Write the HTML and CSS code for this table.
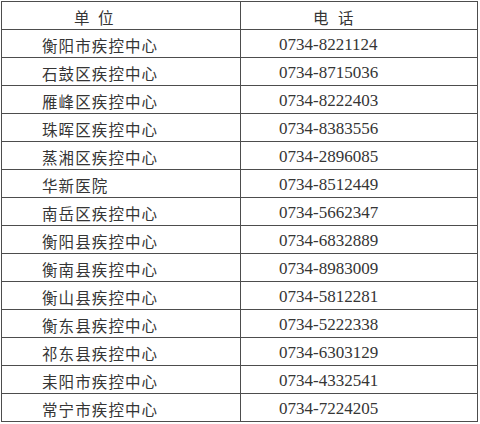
FILE: index.html
```html
<!DOCTYPE html>
<html lang="zh">
<head>
<meta charset="utf-8">
<link rel="stylesheet" href="styles.css">
</head>
<body>
<table class="tbl">
  <thead>
    <tr><th class="h-unit">单位</th><th class="h-tel">电话</th></tr>
  </thead>
  <tbody>
    <tr><td class="unit">衡阳市疾控中心</td><td class="tel">0734-8221124</td></tr>
    <tr><td class="unit">石鼓区疾控中心</td><td class="tel">0734-8715036</td></tr>
    <tr><td class="unit">雁峰区疾控中心</td><td class="tel">0734-8222403</td></tr>
    <tr><td class="unit">珠晖区疾控中心</td><td class="tel">0734-8383556</td></tr>
    <tr><td class="unit">蒸湘区疾控中心</td><td class="tel">0734-2896085</td></tr>
    <tr><td class="unit">华新医院</td><td class="tel">0734-8512449</td></tr>
    <tr><td class="unit">南岳区疾控中心</td><td class="tel">0734-5662347</td></tr>
    <tr><td class="unit">衡阳县疾控中心</td><td class="tel">0734-6832889</td></tr>
    <tr><td class="unit">衡南县疾控中心</td><td class="tel">0734-8983009</td></tr>
    <tr><td class="unit">衡山县疾控中心</td><td class="tel">0734-5812281</td></tr>
    <tr><td class="unit">衡东县疾控中心</td><td class="tel">0734-5222338</td></tr>
    <tr><td class="unit">祁东县疾控中心</td><td class="tel">0734-6303129</td></tr>
    <tr><td class="unit">耒阳市疾控中心</td><td class="tel">0734-4332541</td></tr>
    <tr><td class="unit">常宁市疾控中心</td><td class="tel">0734-7224205</td></tr>
  </tbody>
</table>
</body>
</html>
```
FILE: styles.css
```css
html, body {
  margin: 0;
  padding: 0;
  background: #ffffff;
}
body {
  padding: 1px 0 0 1px;
}
.tbl {
  border-collapse: collapse;
  width: 477px;
  table-layout: fixed;
  color: #353535;
  font-family: "Noto Sans CJK SC", "Liberation Serif", sans-serif;
}
.tbl th, .tbl td {
  border: 1px solid #4d4d4d;
  height: 27px;
  padding: 3px 0 0 0;
  box-sizing: border-box;
  height: 28px;
  line-height: 22px;
  text-align: left;
  font-weight: normal;
  vertical-align: middle;
  white-space: nowrap;
}
.tbl th:first-child, .tbl td:first-child {
  width: 239px;
}
.h-unit {
  font-size: 15.5px;
  letter-spacing: 8.5px;
  padding-left: 72px !important;
}
.h-tel {
  font-size: 15.5px;
  letter-spacing: 9.5px;
  padding-left: 72px !important;
}
.unit {
  font-size: 15.5px;
  letter-spacing: 1.1px;
  padding-left: 40px !important;
}
.tel {
  font-family: "Liberation Serif", serif;
  font-size: 17px;
  padding-left: 38px !important;
}
```
